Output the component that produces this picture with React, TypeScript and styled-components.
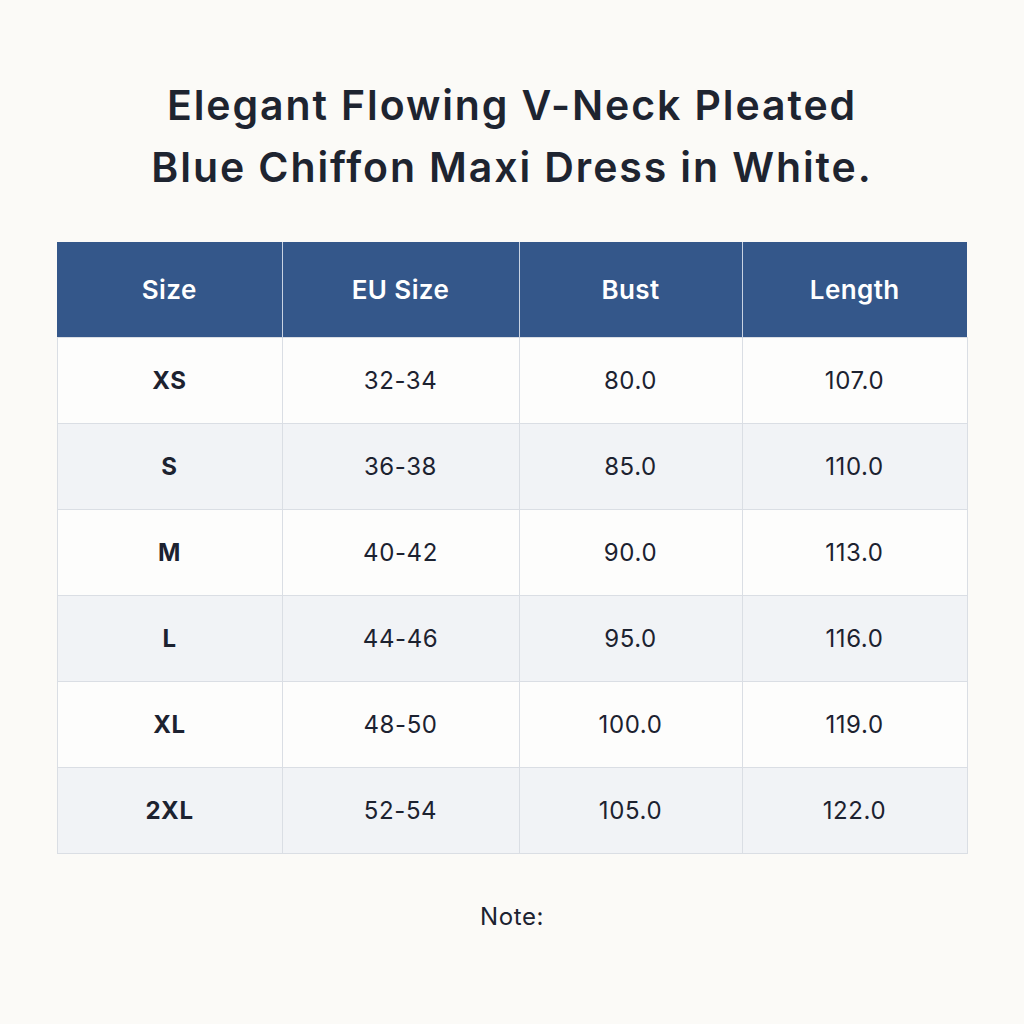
import React from 'react';
import styled, { createGlobalStyle } from 'styled-components';

const GlobalStyle = createGlobalStyle`
  html, body {
    margin: 0;
    padding: 0;
    background: #fbfaf7;
  }
  body {
    font-family: Inter, "Noto Sans", sans-serif;
    color: #1c2230;
  }
`;

const Page = styled.div`
  width: 1024px;
  height: 1024px;
  display: flex;
  flex-direction: column;
  align-items: center;
  box-sizing: border-box;
  padding-top: 74px;
`;

const Title = styled.h1`
  margin: 0;
  font-size: 41px;
  line-height: 62px;
  font-weight: 600;
  text-align: center;
  color: #1e2430;
  letter-spacing: 1.9px;
`;

const Table = styled.table`
  margin-top: 44px;
  width: 910px;
  border-collapse: collapse;
  table-layout: fixed;
`;

const HeadCell = styled.th`
  height: 95px;
  padding: 0;
  background: #34578a;
  color: #ffffff;
  font-size: 26px;
  font-weight: 600;
  letter-spacing: 0.4px;
  text-align: center;
  border-left: 1px solid #c9d3e2;
  &:first-child {
    border-left: none;
  }
`;

const Row = styled.tr<{ $striped: boolean }>`
  background: ${p => (p.$striped ? '#f1f3f6' : '#fdfdfc')};
`;

const Cell = styled.td<{ $bold?: boolean }>`
  height: 85px;
  padding: 0;
  text-align: center;
  font-size: 24px;
  letter-spacing: 0.6px;
  font-weight: ${p => (p.$bold ? 700 : 400)};
  color: #1c2230;
  border: 1px solid #dadee4;
`;

const Note = styled.div`
  margin-top: 48px;
  font-size: 24px;
  letter-spacing: 0.6px;
  color: #1c2230;
`;

const columns = [
  { label: 'Size', width: 225 },
  { label: 'EU Size', width: 237 },
  { label: 'Bust', width: 223 },
  { label: 'Length', width: 225 },
];

const rows = [
  ['XS', '32-34', '80.0', '107.0'],
  ['S', '36-38', '85.0', '110.0'],
  ['M', '40-42', '90.0', '113.0'],
  ['L', '44-46', '95.0', '116.0'],
  ['XL', '48-50', '100.0', '119.0'],
  ['2XL', '52-54', '105.0', '122.0'],
];

const App: React.FC = () => (
  <>
    <GlobalStyle />
    <Page>
      <Title>
        Elegant Flowing V-Neck Pleated
        <br />
        Blue Chiffon Maxi Dress in White.
      </Title>
      <Table>
        <colgroup>
          {columns.map(c => (
            <col key={c.label} style={{ width: c.width }} />
          ))}
        </colgroup>
        <thead>
          <tr>
            {columns.map(c => (
              <HeadCell key={c.label}>{c.label}</HeadCell>
            ))}
          </tr>
        </thead>
        <tbody>
          {rows.map((r, i) => (
            <Row key={r[0]} $striped={i % 2 === 1}>
              {r.map((v, j) => (
                <Cell key={j} $bold={j === 0}>{v}</Cell>
              ))}
            </Row>
          ))}
        </tbody>
      </Table>
      <Note>Note:</Note>
    </Page>
  </>
);

export default App;
